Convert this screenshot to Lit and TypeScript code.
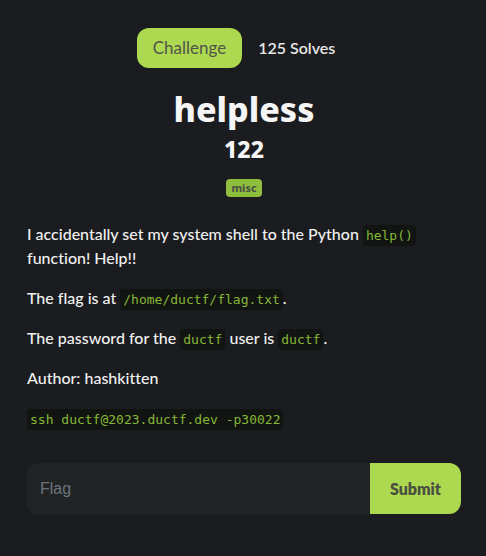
import { LitElement, html, css } from "lit";
import { customElement } from "lit/decorators.js";

@customElement("app-root")
export class AppRoot extends LitElement {
  static styles = css`
    :host {
      display: block;
      box-sizing: border-box;
      min-height: 100vh;
      padding: 28px 25px 40px 27px;
      background: #1b1c1f;
      color: #f0f0f0;
      font: 500 16px/24px Lato, sans-serif;
      font-variant-ligatures: none;
    }
    .tabs {
      display: flex;
      justify-content: center;
    }
    .tab {
      height: 40px;
      padding: 0 16px;
      border: 0;
      border-radius: 12px;
      background: none;
      color: #e6e6e6;
      font: 600 16px/24px Lato, sans-serif;
    }
    .tab.active {
      background: #add951;
      color: #505548;
      font-weight: 400;
      font-size: 17px;
    }
    .head {
      text-align: center;
    }
    h2, h3 {
      margin: 0;
      color: #f5f5f5;
    }
    h2 {
      margin-top: 20px;
      font: 800 34px/42px "Noto Sans", sans-serif;
    }
    h3 {
      font: 800 23px/38px "Noto Sans", sans-serif;
    }
    .badge {
      display: block;
      width: fit-content;
      margin: 11px auto 25px;
      padding: 0 5px;
      border-radius: 4px;
      background: #8fbd3c;
      color: #4a4d45;
      font: 700 11px/18px "Noto Sans", sans-serif;
    }
    p {
      margin: 0 0 16px;
    }
    code {
      padding: 3px;
      border-radius: 4px;
      background: #111411;
      color: #87b837;
      font: 13px/20px "DejaVu Sans Mono", monospace;
    }
    .entry {
      display: flex;
      margin-top: 33px;
    }
    input {
      flex: 1;
      min-width: 0;
      height: 52px;
      box-sizing: border-box;
      padding: 0 13px;
      border: 0;
      border-radius: 12px 0 0 12px;
      background: #222324;
      color: #f0f0f0;
      font: 16px "Liberation Sans", sans-serif;
    }
    input::placeholder {
      color: #6c757d;
      opacity: 1;
    }
    .submit {
      height: 51px;
      padding: 0 20px;
      border: 0;
      border-radius: 0 12px 12px 0;
      background: #add951;
      color: #4a4f40;
      font: 800 16px Lato, sans-serif;
    }
  `;

  render() {
    return html`
      <nav class="tabs">
        <button class="tab active">Challenge</button>
        <button class="tab">125 Solves</button>
      </nav>
      <header class="head">
        <h2>helpless</h2>
        <h3>122</h3>
        <span class="badge">misc</span>
      </header>
      <p>I accidentally set my system shell to the Python <code>help()</code> function! Help!!</p>
      <p>The flag is at <code>/home/ductf/flag.txt</code>.</p>
      <p>The password for the <code>ductf</code> user is <code>ductf</code>.</p>
      <p>Author: hashkitten</p>
      <p><code>ssh ductf@2023.ductf.dev -p30022</code></p>
      <form class="entry" @submit=${(e: Event) => e.preventDefault()}>
        <input type="text" placeholder="Flag" aria-label="Flag" />
        <button class="submit">Submit</button>
      </form>
    `;
  }
}
